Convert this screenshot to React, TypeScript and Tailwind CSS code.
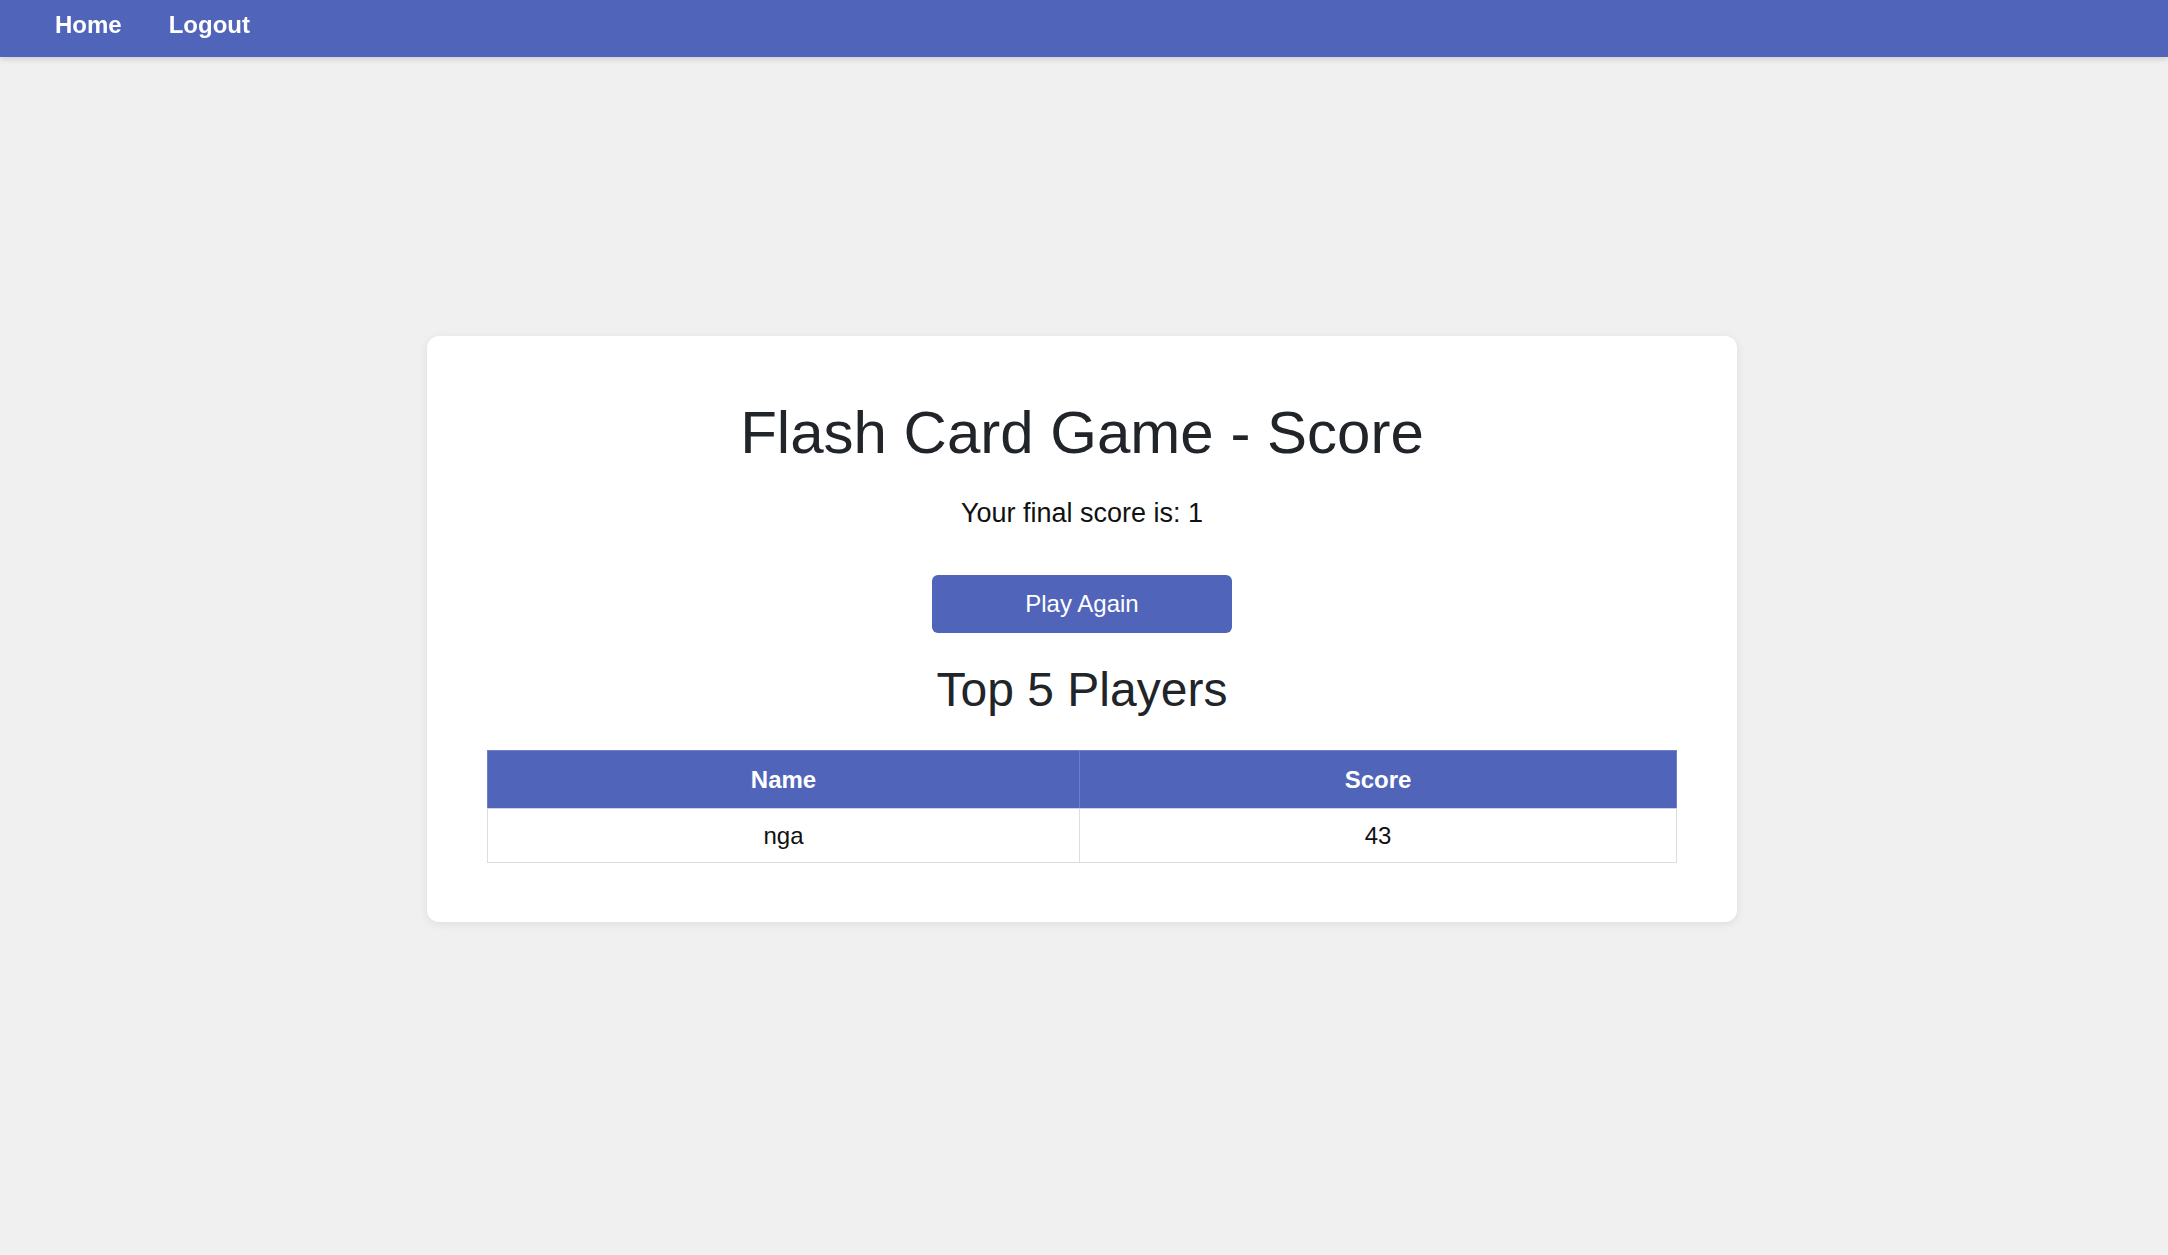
import React from "react";

const topPlayers = [{ name: "nga", score: 43 }];

export default function App() {
  const finalScore = 1;

  return (
    <div className="min-h-screen bg-[#f0f0f0] text-[#212529] font-['Liberation_Sans',Arial,sans-serif]">
      {/* top bar */}
      <nav className="fixed top-0 left-0 right-0 h-[57px] bg-[#5065b9] shadow-[0_2px_6px_rgba(0,0,0,0.15)] flex items-start pt-[11px] pl-[55px] gap-[47px]">
        <a href="#" className="text-white font-bold text-[24px] leading-[28px]">Home</a>
        <a href="#" className="text-white font-bold text-[24px] leading-[28px]">Logout</a>
      </nav>

      <div className="min-h-screen flex items-center justify-center pt-[3px] pr-[4px]">
        <div className="w-[1310px] bg-white rounded-[12px] shadow-[0_2px_10px_rgba(0,0,0,0.08)] px-[60px] pt-[62px] pb-[59px] flex flex-col items-center">
          <h1 className="text-[60px] leading-[69px] font-normal">Flash Card Game - Score</h1>
          <p className="mt-[31px] text-[27px] leading-[31px] text-[#111]">Your final score is: {finalScore}</p>
          <button className="mt-[46px] w-[300px] h-[58px] rounded-[6px] bg-[#5065b9] text-white text-[24px] leading-[28px]">
            Play Again
          </button>
          <h2 className="mt-[29px] text-[48px] leading-[55px] font-normal">Top 5 Players</h2>

          <table className="mt-[33px] w-full border-collapse text-[24px]">
            <thead>
              <tr className="bg-[#5065b9] text-white">
                <th className="w-[592px] h-[58px] border border-[#6d7fc8] border-b-[#cdd2ea] font-bold">Name</th>
                <th className="h-[58px] border border-[#6d7fc8] border-b-[#cdd2ea] font-bold">Score</th>
              </tr>
            </thead>
            <tbody>
              {topPlayers.map((p) => (
                <tr key={p.name}>
                  <td className="h-[54px] border border-[#dddddd] text-center text-[#111]">{p.name}</td>
                  <td className="h-[54px] border border-[#dddddd] text-center text-[#111]">{p.score}</td>
                </tr>
              ))}
            </tbody>
          </table>
        </div>
      </div>
    </div>
  );
}
